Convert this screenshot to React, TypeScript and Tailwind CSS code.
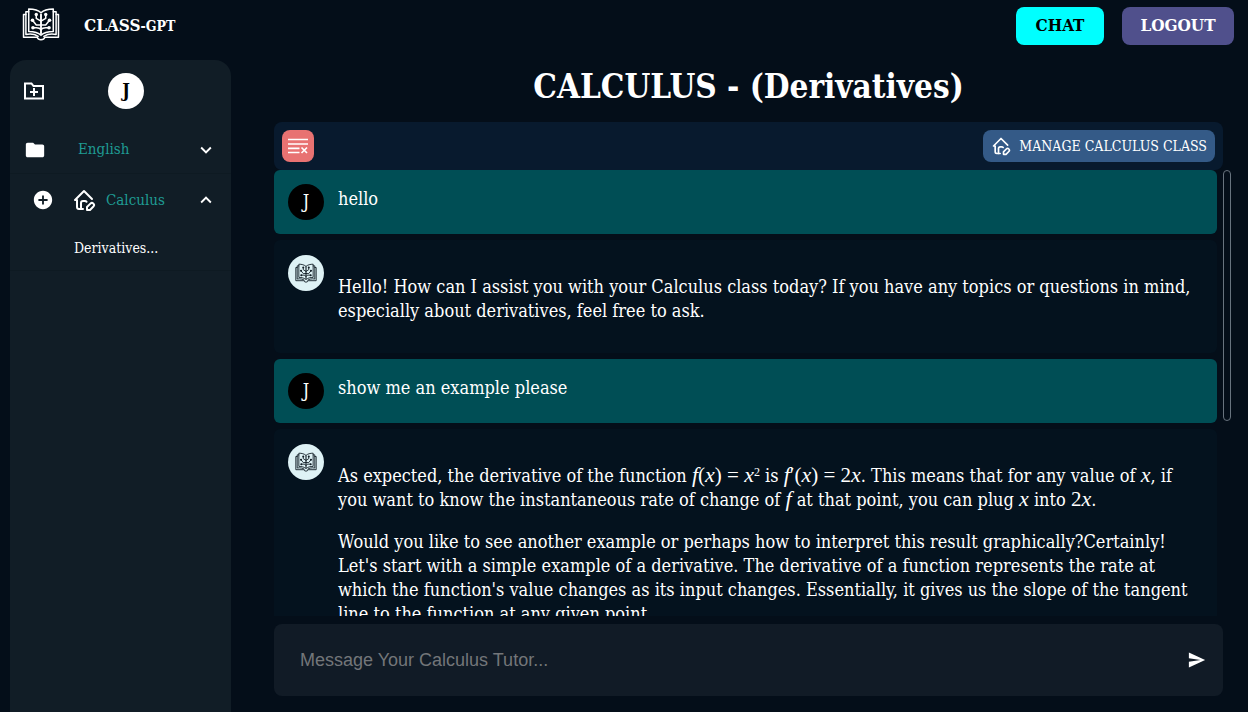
import { useState } from "react";
import type { ReactNode } from "react";
import { IoMdSend } from "react-icons/io";
import { MdFolder, MdAddCircle, MdExpandMore, MdExpandLess } from "react-icons/md";
import { TbHomeEdit } from "react-icons/tb";

function BookLogo({ className }: { className: string }) {
  return (
    <svg viewBox="0 0 40 36" fill="none" stroke="currentColor" strokeWidth="1.6" strokeLinejoin="round" strokeLinecap="round" className={className} aria-hidden="true">
      <path d="M20 6C17 3 12 2 7 2v24c5 0 10 1 13 4 3-3 8-4 13-4V2C28 2 23 3 20 6z" />
      <path d="M7 5H4v24c5-1 10 0 13 2M33 5h3v24c-5-1-10 0-13 2" />
      <path d="M4 8H1.500v24H16c1 3.500 7 3.500 8 0h14.500V8H36" />
      <path strokeWidth="2" d="M20 8v20" />
      <path d="M20 15l-5-3V8M20 15l5-3V8M20 19h-5l-4-5M20 19h5l4-5M20 24c-2-3-4-2-8-2M20 24c2-3 4-2 8-2" />
      <g fill="currentColor" stroke="none">
        <circle cx="15" cy="8" r="1.800" /><circle cx="25" cy="8" r="1.800" />
        <circle cx="11" cy="14" r="1.900" /><circle cx="29" cy="14" r="1.900" />
        <circle cx="11.500" cy="22" r="1.900" /><circle cx="28.500" cy="22" r="1.900" />
      </g>
    </svg>
  );
}

function ClearIcon() {
  return (
    <svg viewBox="0 0 20 16" className="h-4 w-5" fill="none" stroke="currentColor" strokeWidth="1.700" aria-hidden="true">
      <path d="M0 1.500h20M0 6h20M0 10.300h11.500M0 14.500h11.500M13.500 9.500l5.500 5.500M19 9.500l-5.500 5.500" />
    </svg>
  );
}

function NewFolderIcon() {
  return (
    <svg viewBox="0 0 24 24" className="size-6" fill="none" stroke="currentColor" strokeWidth="2" aria-hidden="true">
      <path d="M3 4.500h6.500l2 2.500H21v12.500H3zM12 9v8M8 13h8" />
    </svg>
  );
}

function M({ children }: { children: ReactNode }) {
  return <i className="font-['Liberation_Serif',serif] text-[22px] leading-none">{children}</i>;
}

function R({ children }: { children: ReactNode }) {
  return <span className="font-['Liberation_Serif',serif] text-[21px] leading-none">{children}</span>;
}

function UserMessage({ text }: { text: string }) {
  return (
    <article className="flex h-16 shrink-0 gap-3.5 rounded-md bg-[#004e55] px-3.5 pt-3.5">
      <span className="flex size-9 shrink-0 items-center justify-center rounded-full bg-black text-lg">J</span>
      <p className="text-lg leading-[30px]">{text}</p>
    </article>
  );
}

function TutorMessage({ children }: { children: ReactNode }) {
  return (
    <article className="flex shrink-0 gap-3.5 rounded-md bg-[#04121e] px-3.5 pt-[15px] pb-7.5">
      <span className="flex size-9 shrink-0 items-center justify-center rounded-full bg-[#def2f5] text-[#101c24]">
        <BookLogo className="h-5 w-5.5" />
      </span>
      <div className="flex flex-col gap-4.5 pt-5 text-lg leading-6">{children}</div>
    </article>
  );
}

export default function App() {
  const [draft, setDraft] = useState("");
  return (
    <div className="flex h-screen flex-col overflow-hidden bg-[#040e19] font-['Roboto_Slab','DejaVu_Serif_Condensed','DejaVu_Serif',serif] text-white">
      <header className="flex h-13 shrink-0 items-center justify-between pr-3.5 pl-5.5">
        <a href="#" className="flex items-center gap-6">
          <BookLogo className="mb-1 h-8.5 w-9.5" />
          <span className="text-[17px] font-bold">CLASS<span className="text-sm">-GPT</span></span>
        </a>
        <nav className="flex gap-4.5">
          <button className="h-9.5 w-22 rounded-lg bg-[#00ffff] text-[17px] font-bold text-black">CHAT</button>
          <button className="h-9.5 w-28 rounded-lg bg-[#50508c] text-[17px] font-bold">LOGOUT</button>
        </nav>
      </header>

      <div className="flex min-h-0 flex-1 pt-2">
        <aside className="ml-2.5 w-[221px] shrink-0 rounded-t-2xl bg-[#111d26]">
          <div className="flex h-16.5 items-center pb-1 pl-3">
            <button aria-label="New folder" className="mr-15.5"><NewFolderIcon /></button>
            <span className="flex size-9 items-center justify-center rounded-full bg-white text-lg font-bold text-black">J</span>
          </div>
          <ul>
            <li className="flex h-12 items-center border-b border-[#0e1a22] pr-3.5 pl-3.5">
              <MdFolder className="size-5.5" />
              <a href="#english" className="ml-8 flex-1 text-[15px] text-[#1f9b93]">English</a>
              <button aria-label="Expand English"><MdExpandMore className="size-5.5" /></button>
            </li>
            <li className="border-b border-[#0e1a22]">
              <div className="flex h-13 items-center pr-3.5 pl-5.5">
                <button aria-label="Add topic"><MdAddCircle className="size-5.5" /></button>
                <TbHomeEdit className="ml-4.5 size-6" />
                <a href="#calculus" className="ml-2.5 flex-1 text-[15px] text-[#1f9b93]">Calculus</a>
                <button aria-label="Collapse Calculus"><MdExpandLess className="size-5.5" /></button>
              </div>
              <a href="#derivatives" className="flex h-11 items-center pl-16 text-sm">Derivatives...</a>
            </li>
          </ul>
        </aside>

        <main className="mr-[25px] ml-[43px] flex min-w-0 flex-1 flex-col pb-4">
          <h1 className="h-15.5 shrink-0 pt-1 text-center text-[33px] leading-[46px] font-bold">CALCULUS - (Derivatives)</h1>
          <div className="flex h-12 shrink-0 items-center justify-between rounded-lg bg-[#081a2e] px-2">
            <button aria-label="Clear conversation" className="flex size-8 items-center justify-center rounded-lg bg-[#e87272]"><ClearIcon /></button>
            <button className="flex h-8 items-center gap-2 rounded-lg bg-[#345a87] px-2 text-sm"><TbHomeEdit className="size-5" />MANAGE CALCULUS CLASS</button>
          </div>
          <div className="-mr-2 flex min-h-0 flex-1 gap-1.5">
            <section aria-label="Conversation" className="flex min-w-0 flex-1 flex-col gap-1.5 overflow-y-auto [scrollbar-width:none]">
              <UserMessage text="hello" />
              <TutorMessage>
                <p>Hello! How can I assist you with your Calculus class today? If you have any topics or questions in mind,<br />especially about derivatives, feel free to ask.</p>
              </TutorMessage>
              <UserMessage text="show me an example please" />
              <TutorMessage>
                <p>As expected, the derivative of the function <M>f</M><R>(</R><M>x</M><R>) = </R><M>x</M><sup className="text-xs leading-none font-['Liberation_Serif',serif]">2</sup> is <M>f</M><R>′(</R><M>x</M><R>) = 2</R><M>x</M>. This means that for any value of <M>x</M>, if<br />you want to know the instantaneous rate of change of <M>f</M> at that point, you can plug <M>x</M> into <R>2</R><M>x</M>.</p>
                <p>Would you like to see another example or perhaps how to interpret this result graphically?Certainly!<br />Let's start with a simple example of a derivative. The derivative of a function represents the rate at<br />which the function's value changes as its input changes. Essentially, it gives us the slope of the tangent<br />line to the function at any given point.</p>
              </TutorMessage>
            </section>
            <div className="h-[251px] w-2 shrink-0 rounded-full border border-[#68737e]" />
          </div>
          <form className="mt-2 flex h-18 shrink-0 items-center rounded-lg bg-[#111b26] pr-4 pl-6.5" onSubmit={(e) => e.preventDefault()}>
            <input aria-label="Message" value={draft} onChange={(e) => setDraft(e.target.value)} placeholder="Message Your Calculus Tutor..." className="min-w-0 flex-1 bg-transparent font-['Liberation_Sans',sans-serif] text-lg outline-none placeholder:text-[#737679]" />
            <button aria-label="Send"><IoMdSend className="size-5" /></button>
          </form>
        </main>
      </div>
    </div>
  );
}
